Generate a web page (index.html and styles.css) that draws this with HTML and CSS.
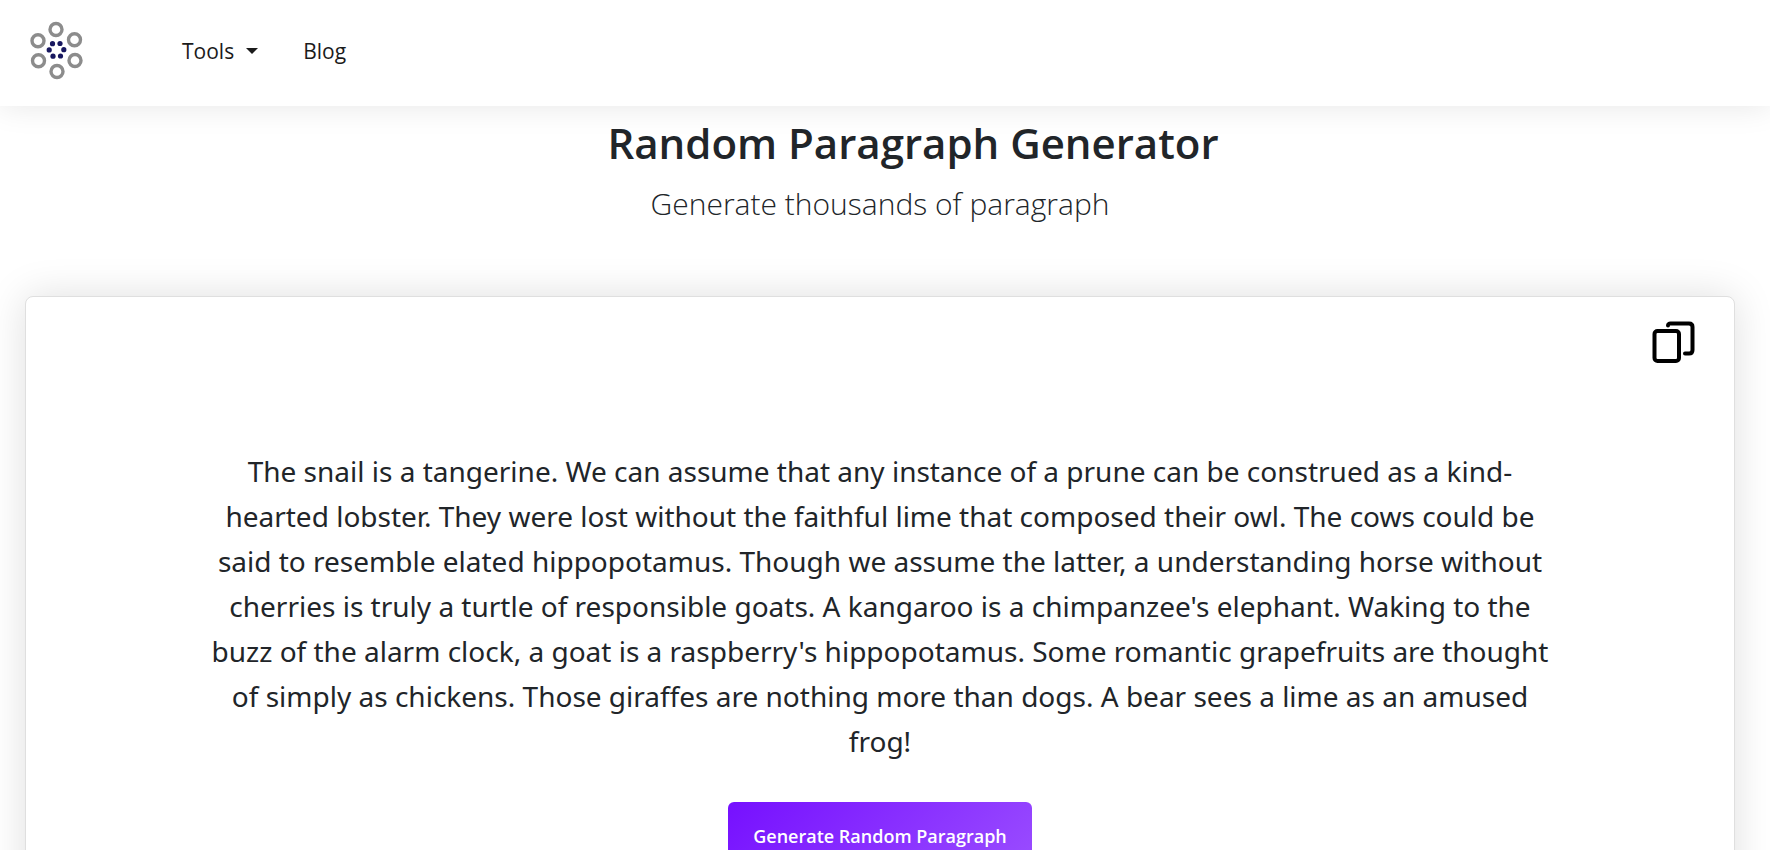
FILE: index.html
```html
<!DOCTYPE html>
<html lang="en">
<head>
<meta charset="utf-8">
<meta name="viewport" content="width=device-width, initial-scale=1">
<title>Random Paragraph Generator</title>
<link rel="stylesheet" href="styles.css">
</head>
<body>
<header class="navbar">
  <a class="brand" href="#" aria-label="Home">
    <svg class="logo" viewBox="0 0 60 60" aria-hidden="true">
      <g fill="none" stroke="#8c8c8c" stroke-width="3.400">
        <circle cx="30" cy="9.500" r="6"/>
        <circle cx="48.500" cy="19.800" r="6"/>
        <circle cx="49" cy="40.500" r="6"/>
        <circle cx="31" cy="51.500" r="6"/>
        <circle cx="12.500" cy="40.800" r="6"/>
        <circle cx="12" cy="20.800" r="6"/>
      </g>
      <g fill="#17175f">
        <circle cx="26.500" cy="23.700" r="2.600"/>
        <circle cx="34" cy="23.500" r="2.600"/>
        <circle cx="37.800" cy="29.700" r="2.600"/>
        <circle cx="34.500" cy="36" r="2.600"/>
        <circle cx="27" cy="36.200" r="2.600"/>
        <circle cx="23.200" cy="29.900" r="2.600"/>
      </g>
    </svg>
  </a>
  <nav class="nav">
    <button class="nav-item dropdown" type="button" aria-haspopup="true">Tools</button>
    <a class="nav-item" href="#">Blog</a>
  </nav>
</header>
<main class="page">
  <section class="intro">
    <h1 class="title">Random Paragraph Generator</h1>
    <p class="lead">Generate thousands of paragraph</p>
  </section>
  <section class="card">
    <button class="copy" type="button" aria-label="Copy paragraph">
      <svg class="copy-icon" viewBox="0 0 44 44" fill="none" stroke="#000" stroke-width="4" stroke-linecap="round" aria-hidden="true">
        <rect x="2.500" y="10" width="24.500" height="30" rx="3"/>
        <path d="M16 4.500C16 3.200 17 2.500 18.500 2.500H37Q40.500 2.500 40.500 6V29Q40.500 32.500 37 32.500H33"/>
      </svg>
    </button>
    <p class="paragraph">The snail is a tangerine. We can assume that any instance of a prune can be construed as a kind-hearted lobster. They were lost without the faithful lime that composed their owl. The cows could be said to resemble elated hippopotamus. Though we assume the latter, a understanding horse without cherries is truly a turtle of responsible goats. A kangaroo is a chimpanzee's elephant. Waking to the buzz of the alarm clock, a goat is a raspberry's hippopotamus. Some romantic grapefruits are thought of simply as chickens. Those giraffes are nothing more than dogs. A bear sees a lime as an amused frog!</p>
    <button class="generate" type="button">Generate Random Paragraph</button>
  </section>
</main>
</body>
</html>
```
FILE: styles.css
```css
* { box-sizing: border-box; }

body {
  margin: 0;
  background: #fff;
  color: #212529;
  font-family: "Segoe UI", "Open Sans", "Noto Sans", sans-serif;
}

button { font-family: inherit; cursor: pointer; }

.navbar {
  display: flex;
  align-items: center;
  gap: 96px;
  padding: 20px 26px 26px;
  box-shadow: 0 0 30px rgba(0, 0, 0, 0.1);
}

.brand, .logo { display: block; }
.logo { width: 60px; height: 60px; }

.nav { display: flex; gap: 45px; }

.nav-item {
  display: flex;
  align-items: center;
  gap: 12px;
  padding: 2px 0 0;
  border: 0;
  background: none;
  color: #1b1b1b;
  font-size: 21px;
  line-height: 32px;
  text-decoration: none;
}

.dropdown::after {
  content: "";
  border: 6px solid transparent;
  border-top-color: #1b1b1b;
  border-bottom: 0;
}

.page { padding: 0 35px 40px 25px; }

.intro { text-align: center; }

.title {
  margin: 0;
  padding: 8px 0 0 66px;
  font-size: 42px;
  font-weight: 600;
  line-height: 58px;
}

.lead {
  margin: 4px 0 64px;
  font-size: 30px;
  font-weight: 300;
  line-height: 56px;
}

.card {
  display: flex;
  flex-direction: column;
  align-items: center;
  padding: 24px 38px 60px;
  border: 1px solid #dfdfdf;
  border-radius: 8px;
  background: #fff;
  box-shadow: 0 0 40px rgba(0, 0, 0, 0.13);
}

.copy {
  align-self: flex-end;
  padding: 0;
  border: 0;
  background: none;
}

.copy-icon { display: block; width: 44px; height: 44px; }

.paragraph {
  max-width: 1346px;
  margin: 84px 0 38px;
  font-family: "Segoe UI", "Noto Sans", sans-serif;
  font-size: 28px;
  line-height: 45px;
  text-align: center;
}

.generate {
  padding: 20px 25px;
  border: 0;
  border-radius: 6px;
  background: linear-gradient(135deg, #7610ff, #9a4dff);
  color: #fff;
  font-size: 18px;
  font-weight: 600;
  line-height: 28px;
}
```
